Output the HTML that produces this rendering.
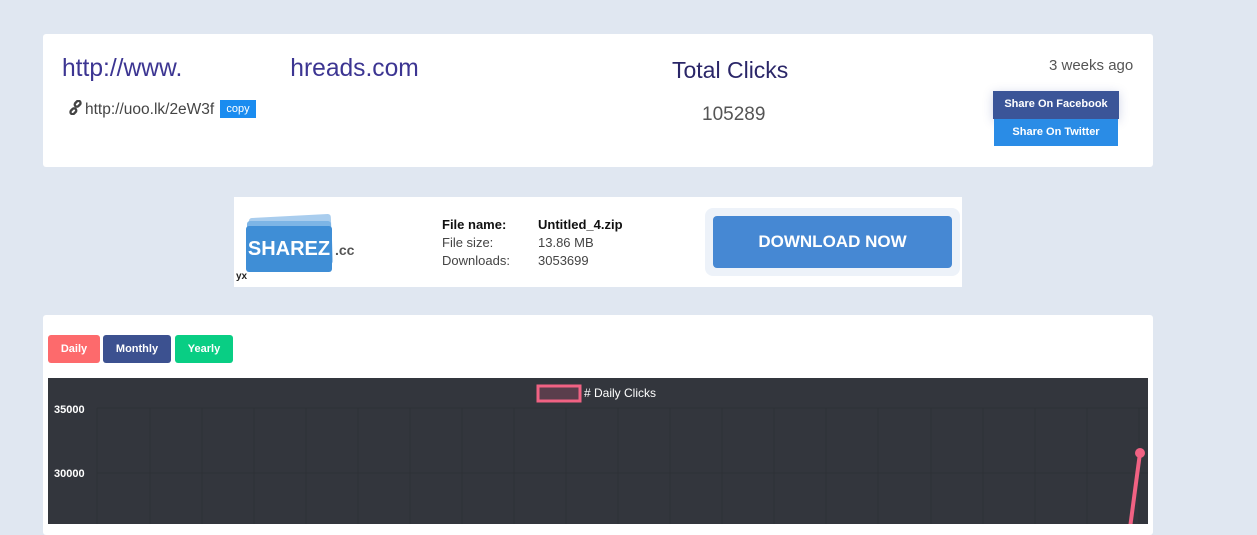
<!DOCTYPE html>
<html><head><style>
body{margin:0;width:1257px;height:524px;background:#e0e7f1;font-family:"Liberation Sans",sans-serif;position:relative;overflow:hidden}
.abs{position:absolute}
.card{position:absolute;background:#fff;border-radius:3px}
.btn{position:absolute;color:#fff;font-weight:bold;font-size:11px;text-align:center;border-radius:3px}
</style></head><body>
<div class="card" style="left:43px;top:34px;width:1110px;height:133px"></div>
<div class="abs" style="left:62px;top:55px;font-size:24.6px;color:#3c3592;white-space:nowrap">http://www.<span style="display:inline-block;width:108px"></span>hreads.com</div>
<div class="abs" style="left:66px;top:100px;font-size:15.5px;color:#444;white-space:nowrap"><svg width="19" height="15" viewBox="0 0 14 14" style="vertical-align:-1px"><g fill="none" stroke="#444" stroke-width="2.2"><rect x="6" y="1.5" width="6" height="4" rx="2" transform="rotate(-45 9 3.5)"/><rect x="2" y="8.5" width="6" height="4" rx="2" transform="rotate(-45 5 10.5)"/></g></svg>http://uoo.lk/2eW3f</div>
<div class="abs" style="left:220px;top:100px;width:36px;height:18px;background:#1a8cf0;color:#fff;font-size:11px;text-align:center;line-height:18px">copy</div>
<div class="abs" style="left:672px;top:57px;font-size:23px;color:#2a2668">Total Clicks</div>
<div class="abs" style="left:702px;top:104px;font-size:19px;color:#555">105289</div>
<div class="abs" style="left:1049px;top:57px;font-size:15px;color:#555">3 weeks ago</div>
<div class="btn" style="left:993px;top:91px;width:126px;height:28px;line-height:26px;background:#3b5598;border-radius:0;box-shadow:0 2px 10px rgba(60,80,160,.25)">Share On Facebook</div>
<div class="btn" style="left:994px;top:119px;width:124px;height:27px;line-height:26px;background:#2a8ce6;border-radius:0">Share On Twitter</div>

<div class="abs" style="left:234px;top:197px;width:728px;height:90px;background:#fff"></div>
<div class="abs" style="left:250px;top:216px;width:82px;height:50px;background:#a9cdee;border-radius:3px;transform:rotate(-3deg)"></div>
<div class="abs" style="left:247px;top:221px;width:84px;height:50px;background:#7db5e6;border-radius:3px"></div>
<div class="abs" style="left:246px;top:226px;width:86px;height:46px;background:#3f8ed6;border-radius:3px;color:#fff;font-weight:bold;font-size:20px;line-height:46px;text-align:center">SHAREZ</div>
<div class="abs" style="left:335px;top:242px;font-size:14px;color:#555;font-weight:bold">.cc</div>
<div class="abs" style="left:236px;top:271px;font-size:10px;color:#222;font-weight:bold">yx</div>
<div class="abs" style="left:442px;top:216px;font-size:13px;color:#111;line-height:18px"><b>File name:</b><br><span style="color:#444">File size:<br>Downloads:</span></div>
<div class="abs" style="left:538px;top:216px;font-size:13px;color:#111;line-height:18px"><b>Untitled_4.zip</b><br><span style="color:#444">13.86 MB<br>3053699</span></div>
<div class="abs" style="left:705px;top:208px;width:255px;height:68px;background:#edf2f9;border-radius:8px"></div>
<div class="abs" style="left:713px;top:216px;width:239px;height:52px;background:#4688d3;border-radius:4px;color:#fff;font-weight:bold;font-size:17px;line-height:52px;text-align:center">DOWNLOAD NOW</div>

<div class="card" style="left:43px;top:315px;width:1110px;height:220px"></div>
<div class="btn" style="left:48px;top:335px;width:52px;height:28px;line-height:28px;background:#fd6a6c">Daily</div>
<div class="btn" style="left:103px;top:335px;width:68px;height:28px;line-height:28px;background:#3c5190">Monthly</div>
<div class="btn" style="left:175px;top:335px;width:58px;height:28px;line-height:28px;background:#09ce84">Yearly</div>
<svg class="abs" style="left:48px;top:378px" width="1100" height="146">
<rect width="1100" height="146" fill="#33363d"/>
<g stroke="#2e3136" stroke-width="1">
<path d="M49 30V146M102 30V146M154 30V146M206 30V146M258 30V146M310 30V146M362 30V146M414 30V146M466 30V146M518 30V146M570 30V146M622 30V146M674 30V146M726 30V146M778 30V146M830 30V146M883 30V146M935 30V146M987 30V146M1039 30V146M1091 30V146"/>
<path d="M49 30H1100M49 95H1100"/>
</g>
<rect x="490" y="8" width="42" height="15" fill="#5a3e4c" stroke="#f06283" stroke-width="3"/>
<text x="536" y="19" fill="#fff" font-size="12" font-family="Liberation Sans">#&#160;Daily Clicks</text>
<text x="6" y="35" fill="#fff" font-size="11" font-weight="bold" font-family="Liberation Sans">35000</text>
<text x="6" y="99" fill="#fff" font-size="11" font-weight="bold" font-family="Liberation Sans">30000</text>
<path d="M1092 75L1082 150" stroke="#f06283" stroke-width="4"/>
<circle cx="1092" cy="75" r="5" fill="#f06283"/>
</svg>
</body></html>
